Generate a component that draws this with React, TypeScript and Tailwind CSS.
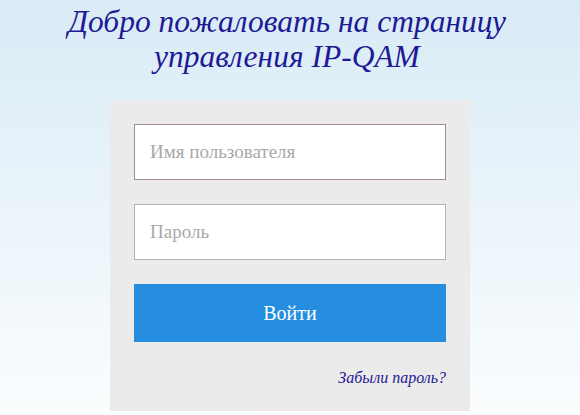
import React from "react";

const serif = { fontFamily: '"Liberation Serif", "Times New Roman", serif' };

export default function App() {
  return (
    <div
      className="min-h-[415px] w-full bg-gradient-to-b from-[#d9ebf6] to-[#fbfdfe] pb-[5px]"
      style={serif}
    >
      <h1 className="pt-[4px] pr-[6px] text-center text-[31.5px] leading-[35px] italic font-normal text-[#1e1a96]">
        Добро пожаловать на страницу
        <br />
        управления IP-QAM
      </h1>

      <form
        className="mx-auto mt-[26px] flex w-[360px] flex-col bg-[#ebebeb] px-[24px] pt-[24px] pb-[21px]"
        onSubmit={(e) => e.preventDefault()}
      >
        <input
          autoFocus
          type="text"
          placeholder="Имя пользователя"
          className="h-[56px] w-full border border-[#b2b2b2] bg-white px-[15px] text-[19px] text-[#333] caret-[#7b2b9b] outline-none placeholder:text-[#a9a9a9] focus:border-[#a08a98]"
          style={serif}
        />
        <input
          type="password"
          placeholder="Пароль"
          className="mt-[24px] h-[56px] w-full border border-[#b2b2b2] bg-white px-[15px] text-[19px] text-[#333] outline-none placeholder:text-[#a9a9a9] focus:border-[#a08a98]"
          style={serif}
        />
        <button
          type="submit"
          className="mt-[24px] h-[58px] w-full bg-[#268ee0] text-[20px] text-white"
          style={serif}
        >
          Войти
        </button>
        <div className="mt-[24px] text-right">
          <a href="#" className="text-[16px] leading-[24px] italic text-[#1e1a96]">
            Забыли пароль?
          </a>
        </div>
      </form>
    </div>
  );
}
